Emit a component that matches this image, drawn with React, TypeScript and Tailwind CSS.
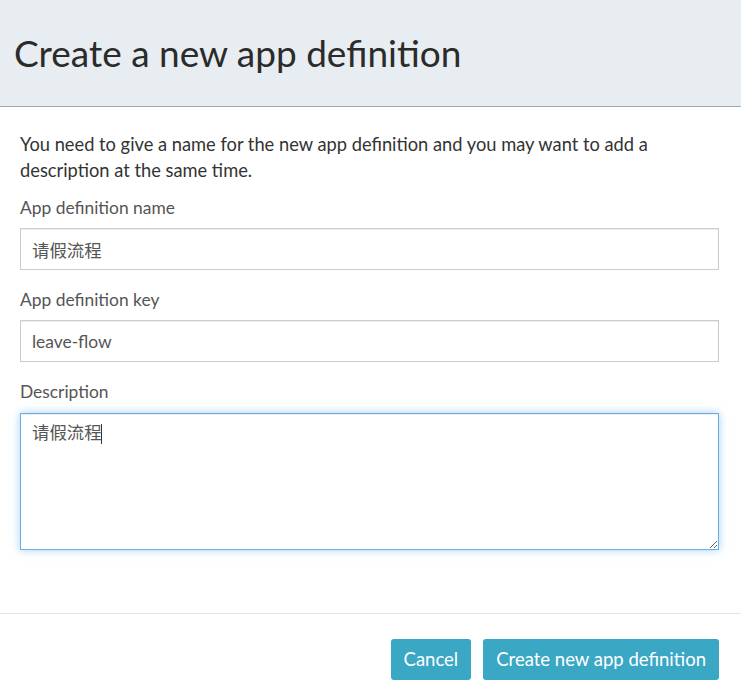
import { useState } from 'react';

const font = "font-['Lato','Noto_Sans_CJK_SC',sans-serif]";

function Field({ label, value, onChange }: { label: string; value: string; onChange: (v: string) => void }) {
  return (
    <div className="flex flex-col">
      <label className="text-[17.4px] leading-[26px] text-[#555]">{label}</label>
      <input
        value={value}
        onChange={e => onChange(e.target.value)}
        className="mt-[7px] h-[42px] w-full border border-[#ccc] bg-white px-[11px] text-[17.4px] text-[#555] outline-none shadow-[inset_0_1px_1px_rgba(0,0,0,0.075)]"
      />
    </div>
  );
}

export default function App() {
  const [name, setName] = useState('请假流程');
  const [key, setKey] = useState('leave-flow');
  const [desc, setDesc] = useState('请假流程');

  return (
    <div className={`${font} w-[741px] h-[698px] bg-white flex flex-col text-[#333]`}>
      <div className="h-[107px] shrink-0 bg-[#e8edf1] border-b border-[#9ea6b4] flex items-center px-[14px]">
        <h1 className="text-[37px] leading-none text-[#2b2b2b] pb-[2px]">Create a new app definition</h1>
      </div>

      <div className="pl-5 pr-[22px] pt-[24px] flex flex-col">
        <p className="text-[18.3px] leading-[26px] text-[#333]">
          You need to give a name for the new app definition and you may want to add a description at the same time.
        </p>
        <div className="mt-3 flex flex-col gap-[17px]">
          <Field label="App definition name" value={name} onChange={setName} />
          <Field label="App definition key" value={key} onChange={setKey} />
          <div className="flex flex-col">
            <label className="text-[17.4px] leading-[26px] text-[#555]">Description</label>
            <div className="relative mt-[8px]">
              <textarea
                value={desc}
                onChange={e => setDesc(e.target.value)}
                className="block h-[137px] w-full border border-[#66afe9] bg-white px-[11px] pt-[7px] text-[17.4px] leading-[24px] text-[#555] outline-none shadow-[inset_0_1px_1px_rgba(0,0,0,0.075),0_0_8px_rgba(102,175,233,0.6)]"
              />
              <span className="absolute left-[81px] top-[11px] h-[20px] w-px bg-[#333]" />
            </div>
          </div>
        </div>
      </div>

      <div className="mt-[63px] border-t border-[#e5e5e5] pt-[25px] pr-[22px] flex justify-end gap-3">
        <button className="h-[41px] rounded-[3px] bg-[#3aa7c5] px-[13px] text-[18.5px] text-white">Cancel</button>
        <button className="h-[41px] rounded-[3px] bg-[#3aa7c5] px-[13px] text-[18.5px] text-white">Create new app definition</button>
      </div>
    </div>
  );
}
